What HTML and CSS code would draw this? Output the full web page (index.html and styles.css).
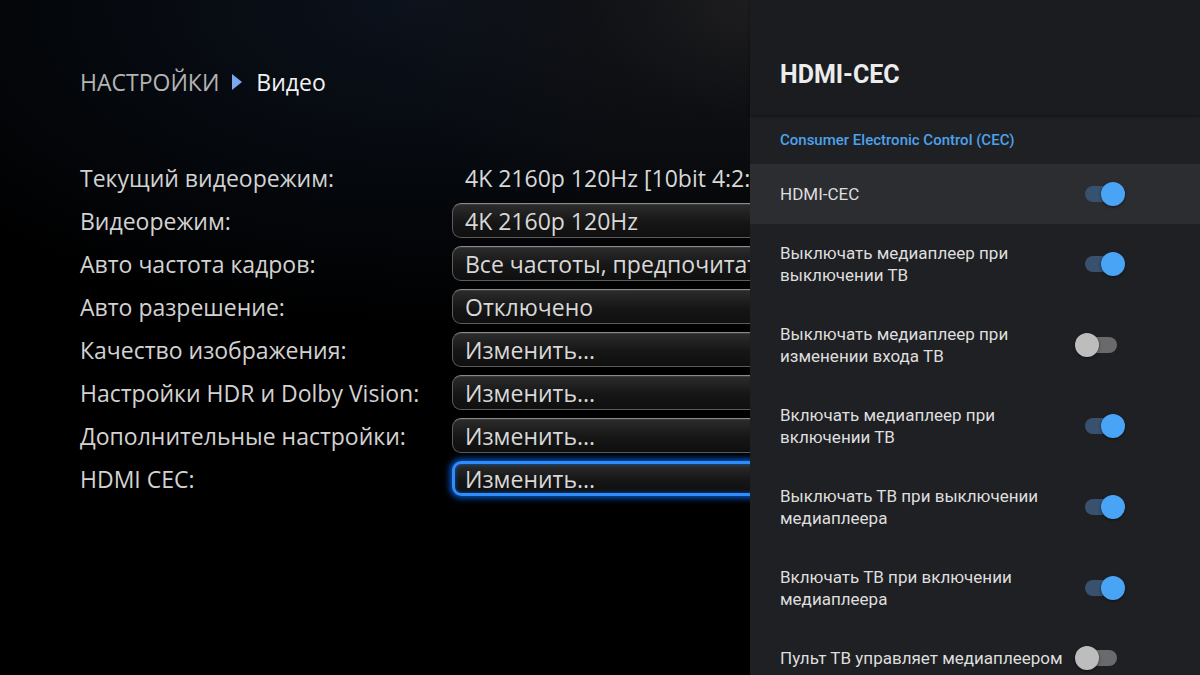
FILE: index.html
```html
<!DOCTYPE html>
<html lang="ru">
<head>
  <meta charset="UTF-8">
  <title>Настройки — Видео</title>
  <link rel="stylesheet" href="styles.css">
</head>
<body>

<div class="screen">
  <div class="main">
    <div class="crumbs">
      <span class="crumb-root">НАСТРОЙКИ</span>
      <svg class="crumb-arrow" width="10" height="16" viewBox="0 0 10 16">
        <path d="M0 0L10 8L0 16z" fill="#7aa7f0"/>
      </svg>
      <span class="crumb-current">Видео</span>
    </div>

    <div class="settings">
      <div class="label">Текущий видеорежим:</div>
      <div class="value plain">4K 2160p 120Hz [10bit 4:2:2]</div>

      <div class="label">Видеорежим:</div>
      <div class="value field">4K 2160p 120Hz</div>

      <div class="label">Авто частота кадров:</div>
      <div class="value field">Все частоты, предпочитать 120Hz</div>

      <div class="label">Авто разрешение:</div>
      <div class="value field">Отключено</div>

      <div class="label">Качество изображения:</div>
      <div class="value field">Изменить...</div>

      <div class="label">Настройки HDR и Dolby Vision:</div>
      <div class="value field">Изменить...</div>

      <div class="label">Дополнительные настройки:</div>
      <div class="value field">Изменить...</div>

      <div class="label">HDMI CEC:</div>
      <div class="value field focused">Изменить...</div>
    </div>
  </div>

  <!-- Боковая панель HDMI-CEC -->
  <div class="panel">
    <div class="panel-head">HDMI-CEC</div>
    <div class="panel-section">Consumer Electronic Control (CEC)</div>

    <div class="opt selected">
      <div class="opt-text">HDMI-CEC</div>
      <span class="switch on"></span>
    </div>
    <div class="opt">
      <div class="opt-text">Выключать медиаплеер при<br>выключении ТВ</div>
      <span class="switch on"></span>
    </div>
    <div class="opt">
      <div class="opt-text">Выключать медиаплеер при<br>изменении входа ТВ</div>
      <span class="switch"></span>
    </div>
    <div class="opt">
      <div class="opt-text">Включать медиаплеер при<br>включении ТВ</div>
      <span class="switch on"></span>
    </div>
    <div class="opt">
      <div class="opt-text">Выключать ТВ при выключении<br>медиаплеера</div>
      <span class="switch on"></span>
    </div>
    <div class="opt">
      <div class="opt-text">Включать ТВ при включении<br>медиаплеера</div>
      <span class="switch on"></span>
    </div>
    <div class="opt">
      <div class="opt-text">Пульт ТВ управляет медиаплеером</div>
      <span class="switch"></span>
    </div>
  </div>
</div>

</body>
</html>
```

FILE: styles.css
```css
* {
  box-sizing: border-box;
}

html, body {
  margin: 0;
  padding: 0;
  background: #000;
}

.screen {
  position: relative;
  width: 1200px;
  height: 675px;
  overflow: hidden;
  background:
    radial-gradient(ellipse 380px 260px at 760px 0, rgba(30,30,32,1) 0%, rgba(20,20,22,0.6) 45%, rgba(0,0,0,0) 100%),
    radial-gradient(ellipse 620px 330px at 420px 0, #0c121c 0%, #05080d 55%, rgba(0,0,0,0) 100%),
    #000;
  font-family: "Open Sans", sans-serif;
}

.main {
  padding: 64px 0 0 80px;
}

.crumbs {
  display: flex;
  align-items: center;
  height: 36px;
  font-size: 23px;
}

.crumb-root {
  color: #b4b4b4;
}

.crumb-arrow {
  margin: 0 14px 0 13px;
}

.crumb-current {
  color: #f2f2f2;
}

.settings {
  margin-top: 60px;
  display: grid;
  grid-template-columns: 372px 680px;
  grid-auto-rows: 35px;
  row-gap: 8px;
  font-size: 23px;
  color: #d2d2d2;
}

.label {
  display: flex;
  align-items: center;
  white-space: nowrap;
}

.value {
  display: flex;
  align-items: center;
  padding-left: 13px;
  white-space: nowrap;
  color: #d8d8d8;
}

.value.field {
  border: 1px solid #5c5c5c;
  border-top-color: #8a8a8a;
  border-radius: 9px;
  padding-left: 12px;
  background: linear-gradient(#2c2c2c, #161616 55%, #0f0f0f);
  box-shadow: inset 0 1px 0 rgba(255,255,255,0.08);
}

.value.focused {
  border: 3px solid #2f8cff;
  padding-left: 10px;
  box-shadow: 0 0 6px 2px rgba(0,110,255,0.8), inset 0 0 4px rgba(0,120,255,0.6);
}

/* панель справа поверх настроек */
.panel {
  position: absolute;
  top: 0;
  right: 0;
  width: 450px;
  height: 675px;
  background: #1f2023;
  font-family: Roboto, sans-serif;
}

.panel-head {
  height: 115px;
  padding: 60px 0 0 30px;
  font-size: 25px;
  font-weight: bold;
  color: #ececec;
  line-height: 30px;
  background: #1b1c1f;
  box-shadow: 0 1px 3px rgba(0,0,0,0.5);
}

.panel-section {
  height: 49px;
  padding-left: 30px;
  display: flex;
  align-items: center;
  font-size: 15px;
  font-weight: 500;
  color: #4ca2ec;
}

.opt {
  display: flex;
  align-items: center;
  justify-content: space-between;
  padding: 18px 83px 19px 30px;
  font-size: 17px;
  line-height: 22px;
  color: #dedede;
}

.opt.selected {
  padding-top: 19px;
  padding-bottom: 19px;
  background: #2c2d31;
}

.switch {
  position: relative;
  width: 32px;
  height: 16px;
  border-radius: 8px;
  background: #6a6a6c;
  flex-shrink: 0;
}

.switch::after {
  content: "";
  position: absolute;
  top: -4px;
  left: -10px;
  width: 24px;
  height: 24px;
  border-radius: 50%;
  background: #bdbdbd;
  box-shadow: 0 1px 3px rgba(0,0,0,0.5);
}

.switch.on {
  background: #37516f;
}

.switch.on::after {
  left: 16px;
  background: #4aa4f6;
}
```
